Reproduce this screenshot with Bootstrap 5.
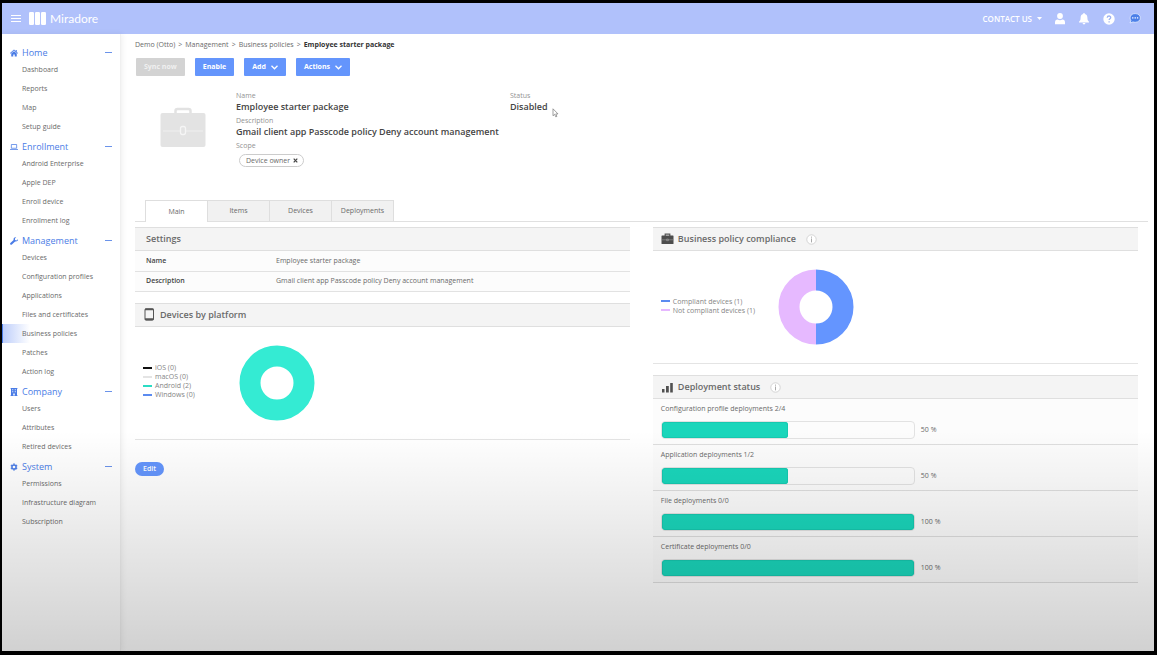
<!DOCTYPE html>
<html lang="en">
<head>
<meta charset="utf-8">
<meta name="viewport" content="width=device-width, initial-scale=1">
<title>Employee starter package - Miradore</title>
<link href="https://cdn.jsdelivr.net/npm/bootstrap@5.3.0/dist/css/bootstrap.min.css" rel="stylesheet">
<style>
  body { background: #000; font: 7px/10px "Open Sans", "Noto Sans", sans-serif; color: #6a6a6a; }
  a { color: inherit; text-decoration: none; }
  button { font: inherit; }
  svg { display: block; flex: none; }
  .frame { min-height: 100vh; padding: 3px 3px 4px 2px; }
  .app { background: #fff; }
  .app::after { content: ""; position: absolute; inset: 0; pointer-events: none; z-index: 5;
    background: linear-gradient(to bottom, rgba(0,0,0,0) 66%, rgba(0,0,0,.18) 100%); }

  .topbar { height: 31px; background: #b0c1fb; color: #fff; padding: 0 13px 0 9px; }
  .brand { font: 12px/18px Lato, sans-serif; gap: 4px; margin-left: 8px; }
  .plain { background: none; border: 0; padding: 0; color: inherit; }
  .contact { font-size: 8px; font-weight: 600; gap: 5px; margin-right: 13px; }
  .tools { gap: 14px; }

  .side { width: 119px; padding-top: 8px; border-right: 1px solid #f0f0f0; box-shadow: 1px 0 6px rgba(0,0,0,.07); }
  .side-head { height: 18px; padding: 3px 8px 0 8px; gap: 4px; color: #4a7ce6; font-size: 9px; font-weight: 500; }
  .side-head a { flex: 1; }
  .side-head svg { width: 8px; height: 8px; }
  .side-head .fold { width: 7px; height: 1px; background: #6b93ea; }
  .side-item { display: flex; align-items: center; height: 19px; padding-left: 20px; }
  .side-item.active { box-shadow: inset 1px 0 #4a7ce6; background: linear-gradient(to right, #bccdfa, #fff 28px); }

  .main { padding: 6px 6px 0 14px; }
  .crumbs { gap: 3px; margin-bottom: 8px; }
  .crumbs b { color: #333; }
  .actions { gap: 10px; padding-left: 1px; }
  .act { height: 18px; padding: 0 8px; gap: 5px; border: 0; border-radius: 1px; background: #6495fc; color: #fff; font-weight: 700; }
  .act:disabled { background: #d3d3d3; color: #f0f0f0; }

  .summary { padding: 15px 0 0 25px; height: 124px; gap: 30px; }
  .summary dl { margin: 0; }
  .summary dt { font-weight: 400; color: #929292; line-height: 10px; }
  .summary dd { margin: 0 0 4px; font-size: 9px; line-height: 11px; font-weight: 600; color: #444; }
  .facts { width: 244px; }
  .summary .case { margin-top: 13px; }
  .scope { height: 13px; padding: 0 5px 0 6px; gap: 3px; margin: 3px 0 0 3px; border: 1px solid #ccc; border-radius: 7px; font-size: 7px; color: #6a6a6a; font-weight: 400; }
  .pointer { position: absolute; left: 42px; top: 17px; }

  .tabs { padding-left: 10px; border-bottom: 1px solid #e0e0e0; }
  .tabs button { width: 62px; height: 21px; background: #f1f1f1; border: 1px solid #dedede; border-width: 1px 1px 0 0; color: #6a6a6a; padding: 0; }
  .tabs button.active { width: 63px; height: 22px; margin-bottom: -1px; background: #fff; border-left-width: 1px; }

  .panels { display: grid; grid-template-columns: minmax(0, 51fr) minmax(0, 50fr); gap: 23px; padding: 5px 10px 0 0; }
  .panel { margin-bottom: 11px; }
  .panel-head { height: 24px; margin: 0; padding: 0 8px; gap: 4px; background: #f4f4f4; border: 1px solid #dfdfdf; border-width: 1px 0; font-size: 9px; line-height: 12px; font-weight: 600; color: #6a6a6a; }
  .panel-head .info { margin-left: 6px; }
  .panel-head.bare { padding-left: 11px; }
  .facts-table { width: 100%; }
  .facts-table th, .facts-table td { height: 20px; padding: 0; border-bottom: 1px solid #e2e2e2; background: #fcfcfc; font-weight: 400; }
  .facts-table th { width: 141px; padding-left: 11px; font-weight: 600; color: #444; }
  .chart { height: 113px; border-bottom: 1px solid #e4e4e4; padding-left: 8px; }
  .legend { width: 96px; margin: 0 0 3px; line-height: 9px; color: #858585; }
  .legend.wide { width: 117px; }
  .legend li { display: flex; align-items: center; gap: 3px; }
  .legend i { width: 9px; height: 2px; }

  .deploy { height: 46px; padding: 5px 8px 0; background: #fcfcfc; border-bottom: 1px solid #dedede; }
  .deploy .progress { width: 254px; height: 18px; border: 1px solid #e2e2e2; border-radius: 4px; background: transparent; }
  .deploy .progress-bar { background: #1ad6bb; border-radius: 3px; box-shadow: inset 0 0 0 1px #16c9b0; }
  .deploy .track { gap: 6px; margin-top: 7px; }
  .edit { height: 14px; padding: 0 8px; border: 0; border-radius: 7px; background: #6495fc; color: #fff; font-weight: 600; margin-top: 11px; }
</style>
</head>
<body>
<div class="frame d-flex">
<div class="app position-relative flex-grow-1 d-flex flex-column">
  <header class="topbar d-flex align-items-center">
    <button class="plain" type="button" aria-label="Menu"><svg width="10" height="8" stroke="#fff" stroke-width="1"><path d="M0 .5h10M0 3.5h10M0 6.5h10"/></svg></button>
    <a class="brand d-flex align-items-center" href="#">
      <svg width="17" height="13" fill="#fff"><rect width="5" height="13" rx="1.2"/><rect x="6" width="5" height="13" rx="1.2"/><rect x="12" width="5" height="13" rx="1.2"/></svg>
      Miradore
    </a>
    <button class="plain contact d-flex align-items-center ms-auto" type="button">CONTACT US <svg width="5" height="3" fill="#fff"><path d="M0 0h5L2.500 3z"/></svg></button>
    <div class="tools d-flex align-items-center">
      <button class="plain" type="button" aria-label="Account"><svg width="10" height="12" fill="#fff"><circle cx="5" cy="3" r="2.900"/><path d="M0 11.300V9.500Q0 6.700 2.600 6.500Q5 7.800 7.400 6.500Q10 6.700 10 9.500v1.800z"/></svg></button>
      <button class="plain" type="button" aria-label="Notifications"><svg width="10" height="12" fill="#fff"><path d="M5 0c.6 0 .8.400.8 1C7.700 1.400 8.400 3 8.400 4.700c0 2.300.6 3.100 1.600 4.100v.7H0v-.7c1-1 1.600-1.800 1.600-4.100C1.600 3 2.300 1.400 4.200 1c0-.6.2-1 .8-1zM3.600 10.100h2.800a1.400 1.400 0 0 1-2.800 0z"/></svg></button>
      <button class="plain" type="button" aria-label="Help"><svg width="12" height="12"><circle cx="6" cy="6" r="5.700" fill="#fff"/><path d="M4.200 4.700C4.300 2.400 7.900 2.500 7.700 4.600 7.600 5.700 6.100 5.800 6.100 7.100M6.100 8.200v1.300" fill="none" stroke="#9fb3f3" stroke-width="1.300"/></svg></button>
      <button class="plain" type="button" aria-label="Chat"><svg width="12" height="11"><path d="M6.200.6C9.200.6 11.400 2.400 11.400 4.900S9.200 9.300 6.200 9.300c-.8 0-1.500-.1-2.200-.4L1 10 1.900 7.600C.4 5.500.8.6 6.200.6z" fill="#4a7fe8" stroke="#e6edff" stroke-width=".8"/><g fill="#dce6ff"><circle cx="3.800" cy="4.900" r=".8"/><circle cx="6.200" cy="4.900" r=".8"/><circle cx="8.600" cy="4.900" r=".8"/></g></svg></button>
    </div>
  </header>

  <div class="d-flex flex-grow-1">
    <nav class="side flex-shrink-0" aria-label="Main">
      <div class="side-head d-flex align-items-center"><svg viewBox="0 0 16 16" fill="currentColor"><path d="M8 1 0 8l1 1.300L8 3.200l7 6.100L16 8l-2.500-2.200V2h-2v2zM8 4.500 2.500 9.200V15h4v-4h3v4h4V9.200z"/></svg><a href="#">Home</a><span class="fold"></span></div>
      <a class="side-item" href="#">Dashboard</a>
      <a class="side-item" href="#">Reports</a>
      <a class="side-item" href="#">Map</a>
      <a class="side-item" href="#">Setup guide</a>
      <div class="side-head d-flex align-items-center"><svg viewBox="0 0 16 16" fill="none" stroke="currentColor" stroke-width="1.500"><path d="M2.700 3h10.600v7.500H2.700zM0 13h16"/></svg><a href="#">Enrollment</a><span class="fold"></span></div>
      <a class="side-item" href="#">Android Enterprise</a>
      <a class="side-item" href="#">Apple DEP</a>
      <a class="side-item" href="#">Enroll device</a>
      <a class="side-item" href="#">Enrollment log</a>
      <div class="side-head d-flex align-items-center"><svg viewBox="0 0 16 16" fill="currentColor"><path d="M15.700 4.300 13 7l-3-1V3l2.500-2.300C9.500-.4 6.300 2 7.200 5.800L.8 12.200c-1.800 2 1 4.700 3 3l6.400-6.400c3.800.8 6.500-1.500 5.500-4.500z"/></svg><a href="#">Management</a><span class="fold"></span></div>
      <a class="side-item" href="#">Devices</a>
      <a class="side-item" href="#">Configuration profiles</a>
      <a class="side-item" href="#">Applications</a>
      <a class="side-item" href="#">Files and certificates</a>
      <a class="side-item active" href="#" aria-current="page">Business policies</a>
      <a class="side-item" href="#">Patches</a>
      <a class="side-item" href="#">Action log</a>
      <div class="side-head d-flex align-items-center"><svg viewBox="0 0 16 16" fill="currentColor"><path fill-rule="evenodd" d="M1 0h14v1.500h-1V14.500h1V16H1v-1.500h1V1.500H1zM4.500 2.500v2h2v-2zm5 0v2h2v-2zm-5 4v2h2v-2zm5 0v2h2v-2zM6.500 11v4h3v-4z"/></svg><a href="#">Company</a><span class="fold"></span></div>
      <a class="side-item" href="#">Users</a>
      <a class="side-item" href="#">Attributes</a>
      <a class="side-item" href="#">Retired devices</a>
      <div class="side-head d-flex align-items-center"><svg viewBox="0 0 16 16"><circle cx="8" cy="8" r="4.200" fill="none" stroke="currentColor" stroke-width="3"/><path d="M8 .8v2M8 13.200v2M1.800 4.400l1.700 1M12.500 10.600l1.700 1M1.800 11.600l1.700-1M12.500 5.400l1.700-1" stroke="currentColor" stroke-width="3.400"/></svg><a href="#">System</a><span class="fold"></span></div>
      <a class="side-item" href="#">Permissions</a>
      <a class="side-item" href="#">Infrastructure diagram</a>
      <a class="side-item" href="#">Subscription</a>
    </nav>

    <main class="main flex-grow-1">
      <nav class="crumbs d-flex" aria-label="Breadcrumb">
        <a href="#">Demo (Otto)</a><span>&gt;</span><a href="#">Management</a><span>&gt;</span><a href="#">Business policies</a><span>&gt;</span><b>Employee starter package</b>
      </nav>
      <div class="actions d-flex">
        <button class="act" type="button" disabled>Sync now</button>
        <button class="act" type="button">Enable</button>
        <button class="act d-flex align-items-center" type="button">Add <svg width="7" height="5" fill="none" stroke="#fff" stroke-width="1.300"><path d="M.5.800l3 3 3-3"/></svg></button>
        <button class="act d-flex align-items-center" type="button">Actions <svg width="7" height="5" fill="none" stroke="#fff" stroke-width="1.300"><path d="M.5.800l3 3 3-3"/></svg></button>
      </div>

      <section class="summary d-flex align-items-start">
        <svg class="case" width="46" height="46" viewBox="0 0 46 46"><path d="M15.500 10V7q0-2 2-2h11q2 0 2 2v3" fill="none" stroke="#e2e2e2" stroke-width="2.500"/><rect x=".5" y="9" width="45" height="34" rx="2" fill="#e3e3e3"/><path d="M3 27h17M26 27h17" stroke="#efefef"/><rect x="20.500" y="22.500" width="5" height="8" rx="2" fill="#e3e3e3" stroke="#f5f5f5" stroke-width="1.300"/></svg>
        <dl class="facts">
          <dt>Name</dt><dd class="text-nowrap">Employee starter package</dd>
          <dt>Description</dt><dd class="text-nowrap">Gmail client app Passcode policy Deny account management</dd>
          <dt>Scope</dt><dd><span class="scope d-inline-flex align-items-center">Device owner <button class="plain d-flex" type="button" aria-label="Remove Device owner"><svg width="5" height="5" stroke="#444" stroke-width="1.200"><path d="M.7.700l3.600 3.600M4.300.700.7 4.300"/></svg></button></span></dd>
        </dl>
        <dl class="position-relative">
          <dt>Status</dt><dd>Disabled</dd>
          <svg class="pointer" width="7" height="10"><path d="M1 .8v7l1.600-1.500 1.200 2.600 1.100-.5-1.100-2.500H6z" fill="#fff" stroke="#777" stroke-width=".7"/></svg>
        </dl>
      </section>

      <div class="tabs d-flex align-items-end" role="tablist">
        <button class="active" type="button" role="tab" aria-selected="true">Main</button>
        <button type="button" role="tab">Items</button>
        <button type="button" role="tab">Devices</button>
        <button type="button" role="tab">Deployments</button>
      </div>

      <div class="panels">
        <div>
          <section class="panel">
            <h2 class="panel-head bare d-flex align-items-center">Settings</h2>
            <table class="facts-table">
              <tr><th scope="row">Name</th><td>Employee starter package</td></tr>
              <tr><th scope="row">Description</th><td>Gmail client app Passcode policy Deny account management</td></tr>
            </table>
          </section>
          <section class="panel">
            <h2 class="panel-head d-flex align-items-center"><svg width="13" height="13"><rect x="2" y=".8" width="8.500" height="11.400" rx="1" fill="none" stroke="#555"/><path d="M2 1.300h8.500M2 11.200h8.500" stroke="#555" stroke-width="1.800"/></svg>Devices by platform</h2>
            <div class="chart d-flex align-items-center">
              <ul class="legend list-unstyled">
                <li><i style="background:#111"></i>iOS (0)</li>
                <li><i style="background:#e4e4e4"></i>macOS (0)</li>
                <li><i style="background:#2bdcc4"></i>Android (2)</li>
                <li><i style="background:#5b8bf0"></i>Windows (0)</li>
              </ul>
              <svg width="76" height="76" role="img" aria-label="Android 2"><circle cx="38" cy="38" r="27" fill="none" stroke="#34ebd3" stroke-width="21"/></svg>
            </div>
          </section>
          <button class="edit" type="button">Edit</button>
        </div>
        <div>
          <section class="panel">
            <h2 class="panel-head d-flex align-items-center"><svg width="13" height="12"><path d="M4.200 3V1.200h4.600V3" fill="none" stroke="#555" stroke-width="1.200"/><rect x=".5" y="2.500" width="12" height="8.500" rx=".6" fill="#4c4c4c"/><path d="M.5 6.800h4.700M7.800 6.800h4.700M5.500 6h2v1.700h-2z" stroke="#999" stroke-width=".6" fill="#777"/></svg>Business policy compliance
              <svg class="info" width="11" height="11"><circle cx="5.500" cy="5.500" r="4.700" fill="#fff" stroke="#ccc" stroke-width=".8"/><path d="M5.500 2.600v1.100M5.500 4.500v3.900" stroke="#aaa"/></svg></h2>
            <div class="chart d-flex align-items-center">
              <ul class="legend wide list-unstyled">
                <li><i style="background:#5b8bf0"></i>Compliant devices (1)</li>
                <li><i style="background:#e6b8ff"></i>Not compliant devices (1)</li>
              </ul>
              <svg width="76" height="76" fill="none" stroke-width="21" role="img" aria-label="1 compliant, 1 not compliant"><path d="M38 11a27 27 0 0 1 0 54" stroke="#6495ff"/><path d="M38 65a27 27 0 0 1 0-54" stroke="#e6b9ff"/></svg>
            </div>
          </section>
          <section class="panel">
            <h2 class="panel-head d-flex align-items-center"><svg width="13" height="11" fill="#505050"><path d="M1 7h2.500v3.500H1zM5 4h2.800v6.500H5zM9.200 1h2.600v9.500H9.200z"/></svg>Deployment status
              <svg class="info" width="11" height="11"><circle cx="5.500" cy="5.500" r="4.700" fill="#fff" stroke="#ccc" stroke-width=".8"/><path d="M5.500 2.600v1.100M5.500 4.500v3.900" stroke="#aaa"/></svg></h2>
            <div class="deploy">Configuration profile deployments 2/4
              <div class="track d-flex align-items-center"><div class="progress"><div class="progress-bar" style="width:50%"></div></div>50 %</div></div>
            <div class="deploy">Application deployments 1/2
              <div class="track d-flex align-items-center"><div class="progress"><div class="progress-bar" style="width:50%"></div></div>50 %</div></div>
            <div class="deploy">File deployments 0/0
              <div class="track d-flex align-items-center"><div class="progress"><div class="progress-bar" style="width:100%"></div></div>100 %</div></div>
            <div class="deploy">Certificate deployments 0/0
              <div class="track d-flex align-items-center"><div class="progress"><div class="progress-bar" style="width:100%"></div></div>100 %</div></div>
          </section>
        </div>
      </div>
    </main>
  </div>
</div>
</div>
<script src="https://cdn.jsdelivr.net/npm/bootstrap@5.3.0/dist/js/bootstrap.bundle.min.js"></script>
</body>
</html>
